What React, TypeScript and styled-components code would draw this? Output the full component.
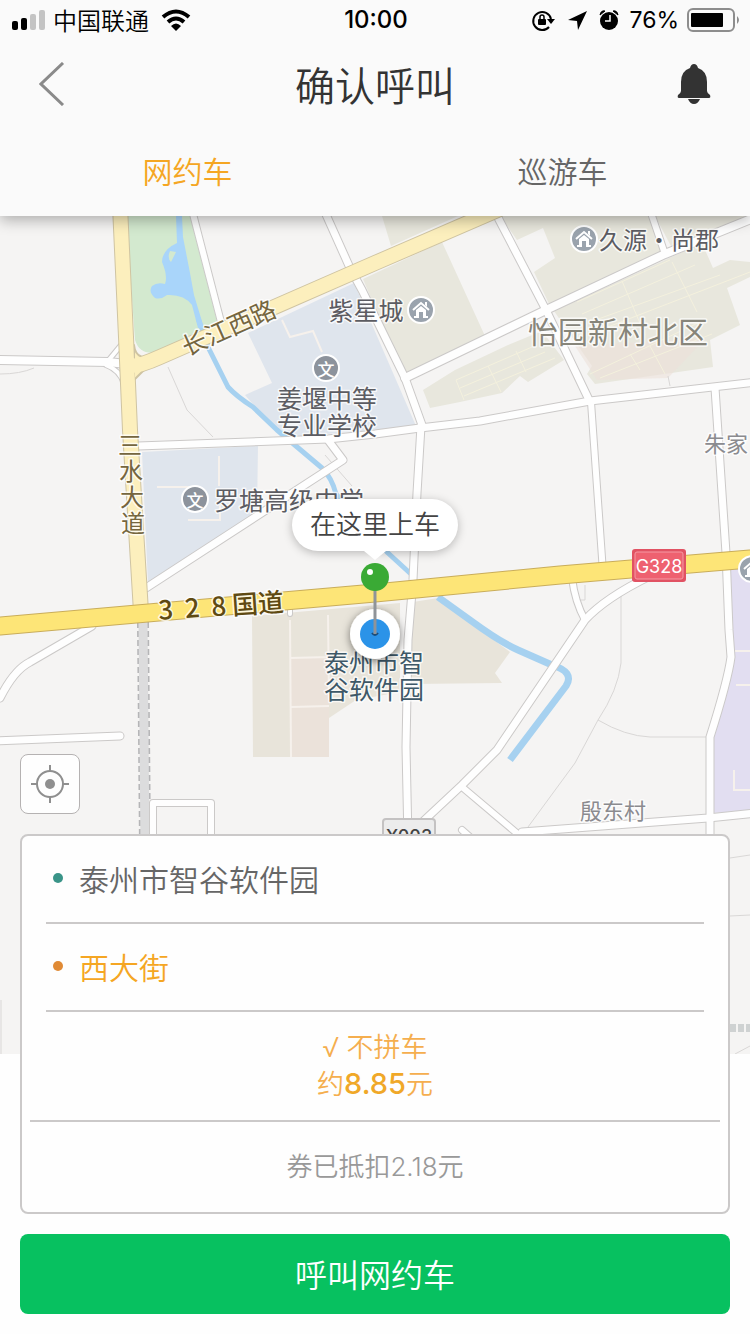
import React, { useState } from "react";
import styled, { createGlobalStyle } from "styled-components";

const cjk = `"Noto Sans CJK SC", sans-serif`;

const GlobalStyle = createGlobalStyle`
  * { box-sizing: border-box; }
  body { margin: 0; background: #fefefe; font-family: Inter, ${cjk}; font-weight: 350; color: #333; }
  button { margin: 0; padding: 0; border: 0; background: none; font: inherit; color: inherit; cursor: pointer; }
  h1, p { margin: 0; }
`;

const Page = styled.div`
  display: flex;
  flex-direction: column;
`;

const Header = styled.header`
  position: relative;
  z-index: 2;
  background: #fafafa;
  box-shadow: 0 4px 14px rgba(0, 0, 0, 0.3);
`;

const StatusBar = styled.div`
  display: grid;
  grid-template-columns: 1fr auto 1fr;
  align-items: center;
  height: 40px;
  padding: 0 10px 0 12px;
  color: #000;
  font-size: 24px;
  line-height: 40px;
  font-weight: 400;
`;

const StatusGroup = styled.div<{ $end?: boolean }>`
  display: flex;
  align-items: center;
  justify-content: ${(p) => (p.$end ? "flex-end" : "flex-start")};
  gap: ${(p) => (p.$end ? "8px" : "12px")};
`;

const Carrier = styled.div`
  display: flex;
  align-items: center;
  gap: 7px;
  font-family: ${cjk};
  font-weight: 350;
`;

const Clock = styled.time`
  font-size: 24px;
  font-weight: 500;
`;

const Percent = styled.span`
  font-size: 23px;
  font-weight: 400;
`;

const NavBar = styled.div`
  display: grid;
  grid-template-columns: 64px 1fr 64px;
  align-items: center;
  height: 88px;
  padding: 0 24px;
`;

const IconButton = styled.button`
  display: flex;
  align-items: center;
  justify-content: center;
  height: 64px;
`;

const Title = styled.h1`
  font-family: ${cjk};
  font-size: 40px;
  line-height: 60px;
  font-weight: 350;
  text-align: center;
`;

const Tabs = styled.nav`
  display: grid;
  grid-template-columns: 1fr 1fr;
  height: 88px;
`;

const Tab = styled.button<{ $active: boolean }>`
  font-size: 30px;
  line-height: 88px;
  color: ${(p) => (p.$active ? "#f5a623" : "#666")};
`;

const Stage = styled.main`
  display: grid;
  grid-template-columns: minmax(0, 1fr);
`;

const MapLayer = styled.section`
  position: relative;
  grid-area: 1 / 1;
  align-self: start;
  height: 838px;
  overflow: hidden;
  background: #f5f4f3;
`;

const MapCanvas = styled.svg`
  display: block;
  width: 100%;
  height: 100%;
`;

const PickupPin = styled.div`
  position: absolute;
  top: 283px;
  left: 50%;
  display: flex;
  flex-direction: column;
  align-items: center;
  transform: translateX(-50%);
`;

const Bubble = styled.div`
  padding: 0 18px;
  border-radius: 26px;
  background: #fff;
  box-shadow: 0 2px 10px rgba(0, 0, 0, 0.25);
  color: #444;
  font-size: 26px;
  line-height: 52px;
  white-space: nowrap;
`;

const PinDrawing = styled.svg`
  display: block;
  overflow: visible;
`;

const Sheet = styled.div`
  grid-area: 1 / 1;
  z-index: 1;
  display: flex;
  flex-direction: column;
  align-items: stretch;
  gap: 20px;
  padding: 538px 20px 20px;
`;

const LocateButton = styled.button`
  display: flex;
  align-items: center;
  justify-content: center;
  align-self: flex-start;
  width: 60px;
  height: 60px;
  border: 1px solid #b5b2b2;
  border-radius: 8px;
  background: #fefefe;
`;

const Card = styled.section`
  border: 2px solid #cbc9c9;
  border-radius: 8px;
  background: #fefefe;
`;

const Stop = styled.button<{ $tone: "start" | "end" }>`
  display: flex;
  align-items: center;
  gap: 16px;
  width: calc(100% - 48px);
  height: 88px;
  margin: 0 24px;
  padding: 0 7px 2px;
  border-bottom: 2px solid #cbc9c9;
  color: ${(p) => (p.$tone === "start" ? "#666" : "#f5a623")};
  font-family: ${cjk};
  font-size: 30px;
  text-align: left;

  &::before {
    content: "";
    width: 10px;
    height: 10px;
    border-radius: 50%;
    background: ${(p) => (p.$tone === "start" ? "#3a9488" : "#e08a35")};
  }
`;

const Fare = styled.div`
  display: flex;
  flex-direction: column;
  align-items: center;
  justify-content: center;
  height: 110px;
  margin: 0 8px;
  border-bottom: 2px solid #cbc9c9;
  color: #f5ae4e;
  font-size: 27px;
  line-height: 36px;
`;

const Amount = styled.strong`
  color: #f0a828;
  font-size: 29px;
  font-weight: 450;
`;

const Coupon = styled.p`
  color: #999;
  font-size: 26px;
  line-height: 90px;
  text-align: center;
`;

const CallButton = styled.button`
  height: 80px;
  padding-bottom: 2px;
  border-radius: 8px;
  background: #07c160;
  color: #fff;
  font-size: 32px;
`;

const MapText = styled.text<{ $tone?: string; $size?: number; $weight?: number }>`
  fill: ${(p) => p.$tone ?? "#5c5c62"};
  font-family: ${cjk};
  font-size: ${(p) => p.$size ?? 25}px;
  font-weight: ${(p) => p.$weight ?? 400};
  text-anchor: middle;
  dominant-baseline: central;
  stroke: rgba(255, 255, 255, 0.75);
  stroke-width: 3px;
  stroke-linejoin: round;
  paint-order: stroke;
`;

const BadgeText = styled.text<{ $dark?: boolean }>`
  fill: ${(p) => (p.$dark ? "#444" : "#fff")};
  font-family: Inter, sans-serif;
  font-size: 18px;
  font-weight: ${(p) => (p.$dark ? 500 : 400)};
  text-anchor: middle;
  dominant-baseline: central;
`;

const MarkerText = styled.text`
  fill: #fff;
  font-family: ${cjk};
  font-size: 17px;
  font-weight: 500;
  text-anchor: middle;
  dominant-baseline: central;
`;

const streets: { d: string; w: number }[] = [
  { d: "M0 360 L108 362 L126 364", w: 9 },
  { d: "M108 361 L122 344", w: 5 },
  { d: "M106 365 Q120 370 124 384", w: 5 },
  { d: "M192 210 L221 322", w: 7 },
  { d: "M324 210 L350 268 L362 290 L405 378 L422 425", w: 8 },
  { d: "M494 210 L546 310 L590 402", w: 8 },
  { d: "M405 378 L546 310 L665 254 L756 217", w: 9 },
  { d: "M650 210 L665 254", w: 7 },
  { d: "M138 446 L328 439 L375 434 L420 428 L480 421 L590 401 L756 382", w: 8 },
  { d: "M421 426 L417 493 L413 580 L408 640 L406 747 L408 840", w: 8 },
  { d: "M591 402 L603 572", w: 7 },
  { d: "M715 388 L726 553 L729 630 L731 657 Q728 680 710 737 L710 1054", w: 8 },
  { d: "M328 440 L343 460 L146 588", w: 8 },
  { d: "M92 626 L30 662 Q14 670 0 698", w: 8 },
  { d: "M-6 741 L120 736", w: 8 },
  { d: "M153 846 L153 803 L211 803 L211 846", w: 7 },
  { d: "M572 578 Q575 602 585 620", w: 7 },
  { d: "M650 576 Q605 598 585 620 L497 750 L462 785 L416 828", w: 8 },
  { d: "M462 787 L519 835", w: 7 },
  { d: "M522 832 L708 818 L756 813", w: 8 },
  { d: "M462 830 L480 846", w: 7 },
  { d: "M290 605 L290 614", w: 5 },
];

const lanes =
  "M168 367 L187 410 L213 437 M0 374 Q20 374 34 368 M621 590 L621 663 Q618 690 598 720 L575 763 L528 827 M598 720 Q625 736 650 737 L706 737 M585 585 L585 600 L578 600 M325 455 L352 486 M668 376 L670 386 M730 858 L750 855 M730 916 L750 915 M735 1054 L750 1046 M1 1000 L1 1054";

function Streets() {
  return (
    <g fill="none" strokeLinecap="round" strokeLinejoin="round">
      {streets.map((s) => (
        <path key={s.d} d={s.d} stroke="#cbc9c8" strokeWidth={s.w + 1} />
      ))}
      {streets.map((s) => (
        <path key={s.d} d={s.d} stroke="#fefefe" strokeWidth={s.w - 1} />
      ))}
    </g>
  );
}

function HomeMarker({ x, y }: { x: number; y: number }) {
  return (
    <g transform={`translate(${x} ${y})`}>
      <circle r="13" fill="#9aa3ad" stroke="#fff" strokeWidth="2" />
      <path d="M-8 0 L0 -7 L8 0" fill="none" stroke="#fff" strokeWidth="2" />
      <path d="M-5 0 L0 -4 L5 0 V6 H7 V8 H2 V2 H-2 V8 H-7 V6 H-5 Z M4 -8 H6 V-3 L4 -5 Z" fill="#fff" />
    </g>
  );
}

function SchoolMarker({ x, y }: { x: number; y: number }) {
  return (
    <g transform={`translate(${x} ${y})`}>
      <circle r="13" fill="#8d939c" stroke="#fff" strokeWidth="2" />
      <MarkerText>文</MarkerText>
    </g>
  );
}

function CityMap() {
  return (
    <MapCanvas viewBox="0 216 750 838" preserveAspectRatio="xMidYMin slice" role="img" aria-label="地图">
      <rect x="-600" y="216" width="1950" height="838" fill="#f5f4f3" />

      <path d="M126 216 L190 216 L217 321 L158 352 Q140 356 135 340 Z" fill="#d3e9cf" />
      <path d="M248 333 L354 283 L416 426 L282 438 L245 395 L272 383 Z M142 452 L258 446 L257 512 L148 584 Z" fill="#dfe5ed" />
      <path
        d="M363 279 L442 242 L485 336 L403 376 Z M382 216 L458 216 L391 246 Z M500 216 L652 216 L663 252 L550 306 L534 272 L555 258 L543 228 L517 240 Z M655 216 L750 216 L672 248 Z M554 311 L702 243 L713 268 L730 260 L750 262 L750 277 L727 288 L740 325 L710 340 L713 367 L595 384 L587 374 L592 366 Z M423 390 L455 370 L508 345 L542 331 L564 360 L528 382 L520 376 L502 393 L460 402 L430 408 Z"
        fill="#e8e7dd"
      />
      <path d="M252 616 L400 603 L400 692 L356 700 L329 718 L329 757 L253 757 Z M413 602 L438 598 L510 652 L495 673 L502 683 L411 684 Z" fill="#e8e4da" />
      <path d="M291 657 H329 V757 H291 Z M575 346 L706 338 L668 378 L597 380 Z" fill="#ece1da" opacity="0.6" />
      <path d="M730 570 L750 567 L750 810 L713 813 L713 738 L734 660 Z" fill="#e2def1" />
      <path
        d="M290 620 L291 757 M290 658 L329 657 M291 707 L329 706 M328 615 L329 700 M734 651 H750 M736 685 H750 M734 770 V790 H750 M219 456 V486 M157 487 H195 M188 520 H220 V505 M282 320 L290 337 L313 331 L322 352"
        fill="none"
        stroke="#f6f1ec"
        strokeWidth="2"
      />
      <path
        d="M577 302 L670 260 M582 314 L695 265 M590 322 L720 275 M600 330 L750 272 M622 281 L645 335 M672 262 L697 312 M590 374 L700 322 M600 378 L712 334 M630 354 L640 370 M650 346 L665 374 M456 380 L532 347 M460 388 L545 352 M464 396 L555 358 M456 380 L464 400 M488 366 L501 392 M516 351 L526 372"
        fill="none"
        stroke="#f4f1dd"
        strokeWidth="1"
      />
      <path d={lanes} fill="none" stroke="#d9d7d6" strokeWidth="1" />

      <g fill="none" stroke="#a6d1f0" strokeLinejoin="round">
        <path d="M198 318 L208 347 L228 387 Q236 396 253 407 L277 430 L322 468 Q332 478 336 494 L388 553 L412 575" strokeWidth="5" />
        <path d="M438 597 L470 620 Q500 642 518 650 L552 665 Q575 672 566 686 L510 760" strokeWidth="7" />
      </g>
      <path
        fillRule="evenodd"
        d="M176 216 H182 L183 237 L190 273 L194 295 L204 328 L198 328 L192 305 Q184 294 167 295 Q161 300 155 298 Q148 292 152 286 Q157 282 165 284 Q168 276 162 262 Q162 250 177 243 Z M170 251 L176 252 L171 262 Q167 258 170 251 Z"
        fill="#a9d5fa"
      />

      <path d="M143 622 L145 846" stroke="#b5b5b7" strokeWidth="12" strokeDasharray="6 3" fill="none" />
      <path d="M143 622 L145 846" stroke="#dcdcdd" strokeWidth="9" fill="none" />
      <path d="M730 1028 H754" stroke="#cfd2d2" strokeWidth="8" strokeDasharray="6 2" fill="none" />

      <Streets />

      <g fill="none" strokeLinejoin="round">
        <path d="M120 206 L126 337 L130 430 L141 612 M131 366 Q140 366 160 357 L375 263 L500 209" stroke="#cfc4a2" strokeWidth="16" />
        <path d="M134 345 Q136 364 160 354 L134 380 Z" fill="#fcefbd" stroke="#cfc4a2" strokeWidth="2" />
        <path d="M120 206 L126 337 L130 430 L141 612 M131 366 Q140 366 160 357 L375 263 L500 209" stroke="#fcefbd" strokeWidth="14" />
        <path d="M-600 676 L0 626 L375 593 L560 575 L750 559 L1350 510" stroke="#c9ad5b" strokeWidth="19" />
        <path d="M-600 676 L0 626 L375 593 L560 575 L750 559 L1350 510" stroke="#fde577" strokeWidth="17" />
      </g>

      <MapText transform="translate(228 326) rotate(-24)" $tone="#75663f">长江西路</MapText>
      <MapText $tone="#75663f" $size={24}>
        <tspan x="130" y="443">三</tspan>
        <tspan x="131" y="469">水</tspan>
        <tspan x="132" y="495">大</tspan>
        <tspan x="133" y="521">道</tspan>
      </MapText>
      <MapText transform="translate(221 604) rotate(-4)" $tone="#5f4a12" $size={26} $weight={500}>
        {"3\u00a0\u00a02\u00a0\u00a08\u00a0国道"}
      </MapText>
      <MapText x="366" y="309">紫星城</MapText>
      <MapText x="659" y="238" $size={24}>久源·尚郡</MapText>
      <MapText x="618" y="330" $tone="#87857a" $size={30}>怡园新村北区</MapText>
      <MapText x="327" y="397">姜堰中等</MapText>
      <MapText x="327" y="424">专业学校</MapText>
      <MapText x="289" y="499">罗塘高级中学</MapText>
      <MapText x="726" y="442" $tone="#8b8b8f" $size={22}>朱家</MapText>
      <MapText x="613" y="809" $tone="#8b8b8f" $size={22}>殷东村</MapText>
      <MapText x="374" y="661" $tone="#3e5868">泰州市智</MapText>
      <MapText x="374" y="688" $tone="#3e5868">谷软件园</MapText>

      <HomeMarker x={584} y={239} />
      <HomeMarker x={421} y={310} />
      <HomeMarker x={752} y={569} />
      <SchoolMarker x={326} y={368} />
      <SchoolMarker x={195} y={499} />

      <rect x="632" y="549" width="54" height="33" rx="3" fill="#e15263" />
      <rect x="635" y="552" width="48" height="27" rx="2" fill="#ee6170" stroke="#f59aa4" />
      <BadgeText x="659" y="566">G328</BadgeText>
      <rect x="383" y="819" width="52" height="32" rx="3" fill="#ececec" stroke="#c4c2c2" strokeWidth="2" />
      <BadgeText x="409" y="836" $dark>X003</BadgeText>
    </MapCanvas>
  );
}

function Pin() {
  return (
    <PinDrawing width="60" height="112" viewBox="345 551 60 112" aria-hidden="true">
      <defs>
        <filter id="ring-shadow" x="-50%" y="-50%" width="200%" height="200%">
          <feDropShadow dx="0" dy="2" stdDeviation="4" floodOpacity="0.5" />
        </filter>
      </defs>
      <path d="M364 551 L375 560 L386 551 Z" fill="#fff" />
      <circle cx="375" cy="634" r="25" fill="#fff" filter="url(#ring-shadow)" />
      <circle cx="375" cy="634" r="15" fill="#2b93e8" />
      <path d="M372 633 Q375 637 378 633" fill="none" stroke="#1b4d7a" strokeWidth="2" />
      <path d="M375 589 V634" stroke="#8f9499" strokeWidth="3" />
      <circle cx="375" cy="577" r="14" fill="#3aaa35" />
      <circle cx="370" cy="572" r="3" fill="#fff" />
    </PinDrawing>
  );
}

function StatusIcons() {
  return (
    <svg width="90" height="24" viewBox="532 8 90 24" aria-hidden="true">
      <path d="M550 27 A9 9 0 1 1 552 19" fill="none" stroke="#000" strokeWidth="2" />
      <path d="M548 19 H556 L552 24 Z" fill="#000" />
      <rect x="539" y="19" width="8" height="6" rx="1" fill="#000" />
      <path d="M541 19 V17 A2 2 0 0 1 545 17 V19" fill="none" stroke="#000" strokeWidth="1.5" />
      <path d="M588 11 L569 20 L578 21 L579 30 Z" fill="#000" />
      <circle cx="610" cy="21" r="9" fill="#000" />
      <path d="M601 15 L606 11 Q602 10 601 15 Z M619 15 L614 11 Q618 10 619 15 Z" fill="#000" stroke="#000" />
      <path d="M611 15 V21 H606" fill="none" stroke="#fff" strokeWidth="1.5" />
    </svg>
  );
}

export default function App() {
  const [tab, setTab] = useState(0);
  return (
    <Page>
      <GlobalStyle />
      <Header>
        <StatusBar>
          <StatusGroup>
            <Carrier>
              <svg width="34" height="20" viewBox="0 0 34 20" aria-hidden="true">
                <rect x="0" y="11" width="6" height="9" rx="2" />
                <rect x="9" y="8" width="6" height="12" rx="2" />
                <rect x="18" y="4" width="6" height="16" rx="2" fill="#c4c4c4" />
                <rect x="27" y="0" width="6" height="20" rx="2" fill="#c4c4c4" />
              </svg>
              中国联通
            </Carrier>
            <svg width="30" height="22" viewBox="0 0 30 22" aria-hidden="true">
              <g fill="none" stroke="#000" strokeWidth="4">
                <path d="M2 8 Q15 -3 28 8" />
                <path d="M7 13 Q15 6 23 13" />
              </g>
              <path d="M10 17 Q15 12 20 17 L15 22 Z" />
            </svg>
          </StatusGroup>
          <Clock>10:00</Clock>
          <StatusGroup $end>
            <StatusIcons />
            <Percent>76%</Percent>
            <svg width="53" height="24" viewBox="0 0 53 24" aria-hidden="true">
              <rect x="1" y="1" width="46" height="22" rx="5" fill="none" stroke="#8d8d8d" strokeWidth="2" />
              <rect x="4" y="5" width="32" height="14" rx="1" />
              <path d="M50 8 Q54 12 50 16 Z" fill="#8d8d8d" />
            </svg>
          </StatusGroup>
        </StatusBar>
        <NavBar>
          <IconButton aria-label="返回">
            <svg width="34" height="44" viewBox="0 0 34 44" aria-hidden="true">
              <path d="M24 1 L2 22 L24 43" fill="none" stroke="#8a8a8a" strokeWidth="3" />
            </svg>
          </IconButton>
          <Title>确认呼叫</Title>
          <IconButton aria-label="通知">
            <svg width="34" height="40" viewBox="0 0 34 40" aria-hidden="true">
              <path
                d="M17 0 Q20 0 21 4 Q30 7 30 18 V27 Q30 29 33 31 Q34 34 32 34 H2 Q0 34 1 31 Q4 29 4 27 V18 Q4 7 13 4 Q14 0 17 0 Z M11 35 H23 Q21 40 17 40 Q13 40 11 35 Z"
                fill="#333"
              />
            </svg>
          </IconButton>
        </NavBar>
        <Tabs>
          {["网约车", "巡游车"].map((name, i) => (
            <Tab key={name} $active={tab === i} aria-pressed={tab === i} onClick={() => setTab(i)}>
              {name}
            </Tab>
          ))}
        </Tabs>
      </Header>
      <Stage>
        <MapLayer>
          <CityMap />
          <PickupPin>
            <Bubble>在这里上车</Bubble>
            <Pin />
          </PickupPin>
        </MapLayer>
        <Sheet>
          <LocateButton aria-label="定位">
            <svg width="38" height="38" viewBox="0 0 38 38" aria-hidden="true">
              <circle cx="19" cy="19" r="13" fill="none" stroke="#8f8f8f" strokeWidth="2" />
              <circle cx="19" cy="19" r="5" fill="#8f8f8f" />
              <path d="M19 0 V6 M19 32 V38 M0 19 H6 M32 19 H38" stroke="#8f8f8f" strokeWidth="2" />
            </svg>
          </LocateButton>
          <Card>
            <Stop $tone="start">泰州市智谷软件园</Stop>
            <Stop $tone="end">西大街</Stop>
            <Fare>
              <span>√ 不拼车</span>
              <span>
                约<Amount>8.85</Amount>元
              </span>
            </Fare>
            <Coupon>券已抵扣2.18元</Coupon>
          </Card>
          <CallButton>呼叫网约车</CallButton>
        </Sheet>
      </Stage>
    </Page>
  );
}
